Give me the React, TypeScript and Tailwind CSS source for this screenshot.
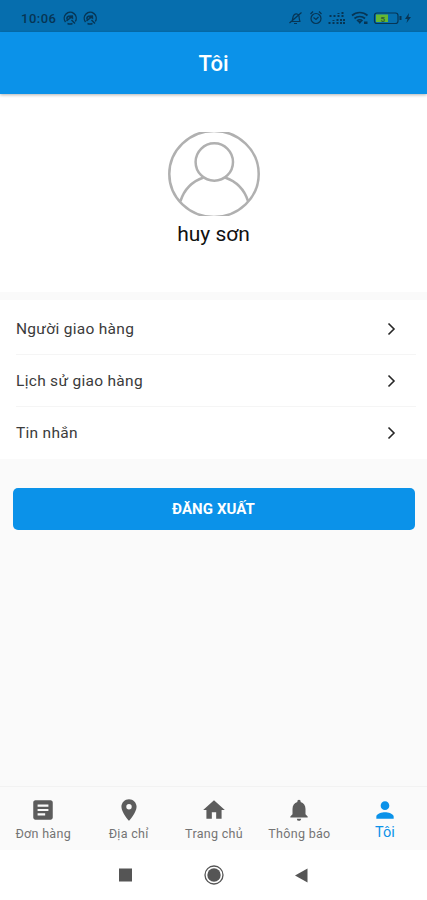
import * as React from "react"
import { MdArticle, MdHome, MdLocationOn, MdNotifications, MdPerson } from "react-icons/md"

const rows = ["Người giao hàng", "Lịch sử giao hàng", "Tin nhắn"]

const tabs = [
  { label: "Đơn hàng", icon: MdArticle },
  { label: "Địa chỉ", icon: MdLocationOn },
  { label: "Trang chủ", icon: MdHome },
  { label: "Thông báo", icon: MdNotifications },
  { label: "Tôi", icon: MdPerson, active: true },
]

export default function App() {
  return (
    <div className="flex h-[900px] w-[427px] flex-col overflow-hidden bg-[#fafafa] font-[Roboto,sans-serif]">
      <StatusBar />
      <header className="z-10 flex h-[62px] shrink-0 items-center justify-center bg-[#0b92e9] pt-px shadow-[0_1px_3px_rgba(0,0,0,0.3)]">
        <h1 className="text-[22px] font-medium text-white">Tôi</h1>
      </header>

      <section className="flex h-[198px] shrink-0 flex-col items-center bg-white pt-[38px]">
        <Avatar />
        <p className="mt-[3px] text-[21px] leading-[30px] text-[#111]">huy sơn</p>
      </section>

      <ul className="mt-2 h-[159px] shrink-0 bg-white pt-[3px]">
        {rows.map((row) => (
          <ListItem key={row} title={row} />
        ))}
      </ul>

      <button className="mx-auto mt-[29px] flex h-[42px] w-[402px] shrink-0 items-center justify-center rounded-[5px] bg-[#0b92e9] pt-px text-[15px] font-bold tracking-[0.1px] text-white">
        ĐĂNG XUẤT
      </button>

      <nav className="mt-auto flex h-16 shrink-0 border-t border-[#f2f2f2] bg-[#fafafa]">
        {tabs.map(({ label, icon: Icon, active }) => (
          <a
            key={label}
            className={`flex flex-1 flex-col items-center whitespace-nowrap pl-px pt-[10px] ${active ? "text-[#0b92e9]" : "text-[#5c5c5c]"}`}
          >
            <Icon size={26} />
            {active ? (
              <span className="text-[14.5px] leading-5">{label}</span>
            ) : (
              <span className="text-[12.5px] leading-[21px] tracking-[0.3px] text-[#747474]">{label}</span>
            )}
          </a>
        ))}
      </nav>
      <SystemBar />
    </div>
  )
}

function ListItem({ title }: { title: string }) {
  return (
    <li className="ml-4 mr-[11px] flex h-[52px] items-center justify-between border-b border-[#f5f5f5] pr-5 last:border-0">
      <span className="pt-[2px] text-[15.5px] tracking-[0.3px] text-[#3b3b3b]">{title}</span>
      <svg width="10" height="14" fill="none" stroke="#262626" strokeWidth="1.6">
        <path d="M2.500 1.500 8 7 2.500 12.500" />
      </svg>
    </li>
  )
}

function Avatar() {
  return (
    <svg width="94" height="84" viewBox="167 132 94 84" className="shrink-0" fill="none" stroke="#b0b0b0" strokeWidth="2.5">
      <ellipse cx="214" cy="174" rx="44.7" ry="43" />
      <circle cx="214.3" cy="162" r="18.7" />
      <path d="M180.5 201C184 190 192 181.500 203.500 177.500M225 177.500C236.500 181.500 244.500 190 248 201" />
    </svg>
  )
}

function StatusBar() {
  return (
    <div className="flex h-8 shrink-0 items-center bg-[#066eae] pl-[21px] pt-1 text-[#073554]">
      <span className="w-[35px] pt-px text-[13px] font-medium tracking-[0.5px]">10:06</span>
      <svg width="36" height="16" className="ml-[6px]" fill="none" stroke="currentColor" strokeWidth="1.4">
        <NoticeIcon />
        <g transform="translate(20 0)">
          <NoticeIcon />
        </g>
      </svg>
      <svg width="126" height="18" viewBox="287 9 126 18" className="ml-auto mr-[14px]" fill="none" stroke="currentColor" strokeWidth="1.2">
        <path d="M290.500 21.500h10M292 21c1-2 .5-4.500 2-6 2-2 4.500-1 5 1 .3 2 0 3.500 1 5M294 23.500h3M289.500 23l12-10.500" />
        <circle cx="316" cy="18.500" r="5" />
        <path d="m310.500 14 2.500-2.500M319 11.500l2.500 2.500M313.500 17.500l2.500 2 2.500-2.500" />
        <path strokeWidth="2" strokeDasharray="2 1" d="M330.500 17v-2M334.500 17v-3M338.500 17v-4M342.500 17v-5.500M329.500 24v-2M333.500 24v-4M337.500 24v-5M341 24v-5.500M344 24v-5.500" />
        <path strokeWidth="1.7" d="M352 15.500c4.500-4 11-4 15.500 0M354.500 18.500c3-2.700 7.500-2.700 10.500 0M357 21c1.500-1.500 4-1.500 5.500 0" />
        <path fill="currentColor" stroke="none" d="m357.500 21 2.300 3 2.300-3zM364 21.500h3.500v2.500H364z" />
        <rect x="374.500" y="13" width="23.500" height="10.500" rx="2.500" />
        <path fill="#65b832" stroke="none" d="M376 14.500h12v7.500h-12z" />
        <text x="380.500" y="21.500" fontSize="8" fontWeight="700" fill="#315e35" stroke="none">5</text>
        <path strokeWidth="2" d="M400.500 16v4" />
        <path fill="currentColor" stroke="none" d="m409 13-4 6h2.500l-1 4 4.500-6h-2.500z" />
      </svg>
    </div>
  )
}

function NoticeIcon() {
  return (
    <>
      <path d="M3.500 12A6 6 0 1 1 13.300 11.500M5.500 13.500c1.800.8 3.500.7 5 0" />
      <path d="M5 9.500a3 3 0 0 1 2-3.500M4.500 11l3-2.500M9.500 10l3.500 3.500" />
      <path d="m7 5.500 4-.3.300 4-2-1-2 1z" fill="currentColor" stroke="none" />
    </>
  )
}

function SystemBar() {
  return (
    <div className="h-[50px] shrink-0 bg-white">
      <svg width="427" height="50" fill="#555">
        <rect x="119" y="18.500" width="13" height="13" />
        <circle cx="214" cy="25" r="6.700" />
        <circle cx="214" cy="25" r="9" fill="none" stroke="#555" strokeWidth="1.300" />
        <path d="M295 25.500 307.500 18.500v14z" />
      </svg>
    </div>
  )
}
